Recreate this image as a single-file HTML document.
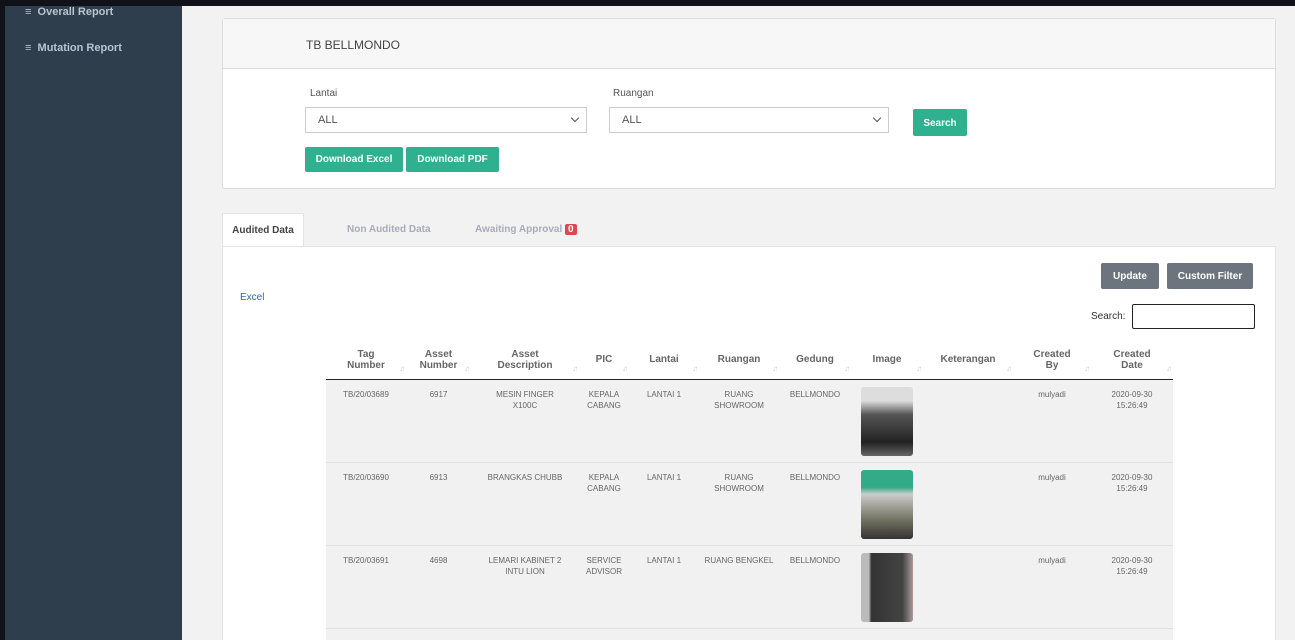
<!DOCTYPE html>
<html style="width:1295px;height:640px;overflow:hidden"><head><style>
*{box-sizing:border-box;margin:0;padding:0}
body{width:1295px;height:640px;overflow:hidden;background:#f2f2f2;font-family:"Liberation Sans",sans-serif;position:relative}
.top{position:absolute;left:0;top:0;width:1295px;height:6px;background:#111118}
.side{position:absolute;left:0;top:6px;width:182px;height:634px;background:#2f3e4d;border-left:5px solid #111118}
.side div{position:absolute;left:20px;color:#b8c4cf;font-size:11px;font-weight:bold}
.card{position:absolute;left:222px;top:18px;width:1054px;height:171px;background:#fff;border:1px solid #ddd;border-radius:3px}
.card .hd{height:50px;background:#f7f7f7;border-bottom:1px solid #ddd;padding:19px 0 0 83px;font-size:12px;color:#444}
.lbl{position:absolute;font-size:10px;color:#555}
.sel{position:absolute;height:26px;border:1px solid #ccc;background:#fff;font-size:11px;color:#555;padding:6px 12px}
.sel:after{content:"";position:absolute;right:8px;top:7px;width:5px;height:5px;border-right:1.3px solid #555;border-bottom:1.3px solid #555;transform:rotate(45deg)}
.btn{position:absolute;background:#2fb08f;color:#fff;font-size:10px;font-weight:bold;border-radius:2px;text-align:center}
.tabs{position:absolute;left:222px;top:213px;font-size:10px;font-weight:bold}
.tab{position:absolute;top:0;height:34px;padding-top:11px;white-space:nowrap;color:#aab}
.panel{position:absolute;left:222px;top:246px;width:1054px;height:394px;background:#fff;border:1px solid #e4e4e4;border-bottom:none;overflow:hidden}
.g{position:absolute;background:#6c757d;color:#fff;font-size:10px;font-weight:bold;border-radius:2px;text-align:center;padding-top:8px;height:26px}
table{position:absolute;left:103px;top:94px;border-collapse:collapse;table-layout:fixed;width:847px}
th{font-size:10px;color:#666;height:38px;border-bottom:1px solid #222;vertical-align:middle;font-weight:bold;position:relative}
th:after{content:"↓↑";position:absolute;right:3px;bottom:6px;font-size:8px;color:#ccc;letter-spacing:-2px;font-weight:normal}
td{font-size:8px;color:#666;background:#f1f1f1;height:83px;vertical-align:top;text-align:center;padding-top:9px;border-top:1px solid #e2e2e2;line-height:11px}
.img{width:52px;height:69px;border-radius:3px;margin:-2px auto 0;background:linear-gradient(#ddd 20%,#555 40%,#222 80%,#666)}
</style></head><body>
<div class="top"></div>
<div class="side"><div style="top:0">≡&nbsp;&nbsp;Overall Report</div><div style="top:36px">≡&nbsp;&nbsp;Mutation Report</div></div>
<div class="card"><div class="hd">TB BELLMONDO</div>
<div class="lbl" style="left:87px;top:69px">Lantai</div>
<div class="lbl" style="left:390px;top:69px">Ruangan</div>
<div class="sel" style="left:82px;top:88px;width:282px">ALL</div>
<div class="sel" style="left:386px;top:88px;width:280px">ALL</div>
<div class="btn" style="left:690px;top:90px;width:54px;height:27px;padding-top:9px">Search</div>
<div class="btn" style="left:82px;top:128px;width:98px;height:25px;padding-top:7px">Download Excel</div>
<div class="btn" style="left:183px;top:128px;width:93px;height:25px;padding-top:7px">Download PDF</div>
</div>
<div class="tabs">
<div class="tab" style="left:0;width:82px;background:#fff;border:1px solid #e4e4e4;border-bottom:none;color:#444;text-align:center;height:35px">Audited Data</div>
<div class="tab" style="left:125px">Non Audited Data</div>
<div class="tab" style="left:253px">Awaiting Approval <span style="background:#e3464f;color:#fff;border-radius:2px;padding:0 3px">0</span></div>
</div>
<div class="panel">
<div style="position:absolute;left:17px;top:45px;font-size:10px;color:#2a6fa8">Excel</div>
<div class="g" style="left:878px;top:16px;width:58px">Update</div>
<div class="g" style="left:944px;top:16px;width:86px">Custom Filter</div>
<div style="position:absolute;left:868px;top:64px;font-size:10px;color:#333">Search:</div>
<div style="position:absolute;left:909px;top:57px;width:123px;height:25px;border:1px solid #222;border-radius:2px"></div>
<table>
<colgroup><col style="width:80px"><col style="width:65px"><col style="width:108px"><col style="width:50px"><col style="width:70px"><col style="width:80px"><col style="width:72px"><col style="width:72px"><col style="width:90px"><col style="width:78px"><col style="width:82px"></colgroup>
<tr><th>Tag<br>Number</th><th>Asset<br>Number</th><th>Asset<br>Description</th><th>PIC</th><th>Lantai</th><th>Ruangan</th><th>Gedung</th><th>Image</th><th>Keterangan</th><th>Created<br>By</th><th>Created<br>Date</th></tr>
<tr><td>TB/20/03689</td><td>6917</td><td>MESIN FINGER<br>X100C</td><td>KEPALA<br>CABANG</td><td>LANTAI 1</td><td>RUANG<br>SHOWROOM</td><td>BELLMONDO</td><td><div class="img"></div></td><td></td><td>mulyadi</td><td>2020-09-30<br>15:26:49</td></tr>
<tr><td>TB/20/03690</td><td>6913</td><td>BRANGKAS CHUBB</td><td>KEPALA<br>CABANG</td><td>LANTAI 1</td><td>RUANG<br>SHOWROOM</td><td>BELLMONDO</td><td><div class="img" style="background:linear-gradient(#3a8 25%,#ccc 35%,#776 70%,#333)"></div></td><td></td><td>mulyadi</td><td>2020-09-30<br>15:26:49</td></tr>
<tr><td>TB/20/03691</td><td>4698</td><td>LEMARI KABINET 2<br>INTU LION</td><td>SERVICE<br>ADVISOR</td><td>LANTAI 1</td><td>RUANG BENGKEL</td><td>BELLMONDO</td><td><div class="img" style="background:linear-gradient(90deg,#bbb 15%,#333 20%,#444 80%,#a99)"></div></td><td></td><td>mulyadi</td><td>2020-09-30<br>15:26:49</td></tr>
</table>
<div style="position:absolute;left:103px;top:381px;width:847px;height:20px;background:#f1f1f1;border-top:1px solid #e2e2e2"></div>
</div>
</body></html>
